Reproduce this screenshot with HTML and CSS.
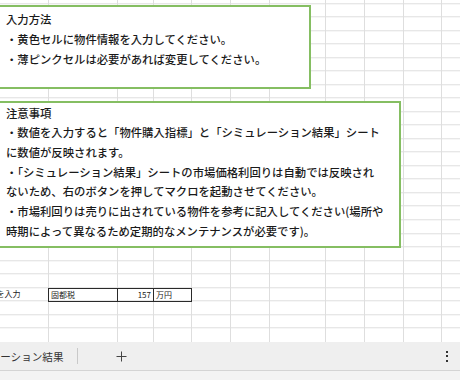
FILE: index.html
```html
<!DOCTYPE html>
<html lang="ja">
<head>
<meta charset="utf-8">
<link rel="stylesheet" href="styles.css">
</head>
<body>
<div class="app">
  <div class="sheet">
    <div class="vline c1"></div>
    <div class="vline c2"></div>
    <div class="vline c3"></div>
    <div class="vline c4"></div>
    <div class="vline c5"></div>
    <div class="vline c6"></div>
    <div class="vline c7"></div>
    <div class="vline c8"></div>
    <div class="vline c9"></div>
    <div class="vline c10"></div>

    <div class="cell overflow-label">を入力</div>
    <div class="data-row">
      <div class="dcell">固都税</div>
      <div class="dcell num">157</div>
      <div class="dcell">万円</div>
    </div>

    <div class="note note-method">
      <div class="note-line">入力方法</div>
      <div class="note-line">・黄色セルに物件情報を入力してください。</div>
      <div class="note-line">・薄ピンクセルは必要があれば変更してください。</div>
    </div>

    <div class="note note-caution">
      <div class="note-line">注意事項</div>
      <div class="note-line">・数値を入力すると「物件購入指標」と「シミュレーション結果」シート</div>
      <div class="note-line">に数値が反映されます。</div>
      <div class="note-line">・「シミュレーション結果」シートの市場価格利回りは自動では反映され</div>
      <div class="note-line">ないため、右のボタンを押してマクロを起動させてください。</div>
      <div class="note-line">・市場利回りは売りに出されている物件を参考に記入してください(場所や</div>
      <div class="note-line">時期によって異なるため定期的なメンテナンスが必要です)。</div>
    </div>
  </div>

  <div class="tabbar">
    <div class="tab">シミュレーション結果</div>
    <div class="tab-divider"></div>
    <div class="add-sheet">
      <svg width="11" height="11" viewBox="0 0 11 11"><path d="M5.5 0.5v10M0.5 5.5h10" stroke="#444" stroke-width="1" fill="none"/></svg>
    </div>
    <div class="spacer"></div>
    <div class="more">
      <span class="dot"></span><span class="dot"></span><span class="dot"></span>
    </div>
  </div>
  <div class="statusbar"></div>
</div>
</body>
</html>
```

FILE: styles.css
```css
html, body {
  margin: 0;
  padding: 0;
  width: 460px;
  height: 380px;
  overflow: hidden;
  background: #ffffff;
  font-family: "Noto Sans CJK JP", "Noto Sans", sans-serif;
  color: #1e1e1e;
}

.app {
  display: flex;
  flex-direction: column;
  height: 380px;
}

.sheet {
  position: relative;
  height: 342px;
  flex: none;
  overflow: hidden;
  display: grid;
  grid-template-columns: 49px 69px 36px 38px 39px 39px 56px 39px 39px 38px 1fr;
  grid-template-rows: 2.8px repeat(26, 13.53px);
  background-color: #ffffff;
  background-image: repeating-linear-gradient(to bottom, transparent 0, transparent 12.53px, #dedede 12.53px, #dedede 13.53px);
  background-position: 0 -9.73px;
}

.vline {
  grid-row: 1 / -1;
  border-right: 1px solid #dedede;
}
.c1 { grid-column: 1; }
.c2 { grid-column: 2; }
.c3 { grid-column: 3; }
.c4 { grid-column: 4; }
.c5 { grid-column: 5; }
.c6 { grid-column: 6; }
.c7 { grid-column: 7; }
.c8 { grid-column: 8; }
.c9 { grid-column: 9; }
.c10 { grid-column: 10; }

.cell {
  font-size: 8px;
  line-height: 13px;
  white-space: nowrap;
}

.overflow-label {
  grid-column: 1;
  grid-row: 23;
  margin-left: -3.5px;
  align-self: center;
  color: #222;
}

.data-row {
  grid-column: 2 / 5;
  grid-row: 23;
  display: grid;
  grid-template-columns: 69px 36px 38px;
  margin-top: 1px;
  margin-left: -1px;
  height: 14px;
  box-sizing: border-box;
  border: 1px solid #2a2a2a;
}

.dcell {
  font-size: 8px;
  line-height: 12px;
  padding: 0 2px;
  white-space: nowrap;
  color: #222;
  border-right: 1px solid #2a2a2a;
}
.dcell:last-child { border-right: none; }
.dcell.num { text-align: right; }

.note {
  position: absolute;
  box-sizing: border-box;
  background: #ffffff;
  border: 2px solid #85be62;
  font-size: 11.35px;
  font-weight: 500;
  white-space: nowrap;
  padding-left: 6px;
  color: #1a1a1a;
}

.note-method {
  left: -2px;
  top: 5px;
  width: 313px;
  height: 84px;
  padding-top: 2px;
}
.note-method .note-line { line-height: 20px; }

.note-caution {
  left: -2px;
  top: 101px;
  width: 403px;
  height: 147px;
  padding-top: 0.5px;
}
.note-caution .note-line { line-height: 19.7px; }

.tabbar {
  height: 28px;
  flex: none;
  display: flex;
  align-items: center;
  background: #efefef;
  border-bottom: 1px solid #d4d4d4;
  box-sizing: content-box;
}

.tab {
  margin-left: -42px;
  font-size: 10.6px;
  color: #333;
  white-space: nowrap;
  width: 105px;
}

.tab-divider {
  width: 1px;
  height: 16px;
  background: #c9c9c9;
  margin-left: 14px;
}

.add-sheet {
  margin-left: 38px;
  display: flex;
  align-items: center;
}

.spacer { flex: 1; }

.more {
  display: flex;
  flex-direction: column;
  gap: 2.5px;
  margin-right: 12px;
}

.dot {
  width: 2px;
  height: 2px;
  background: #333;
}

.statusbar {
  flex: 1;
  background: #f3f3f3;
}
```
